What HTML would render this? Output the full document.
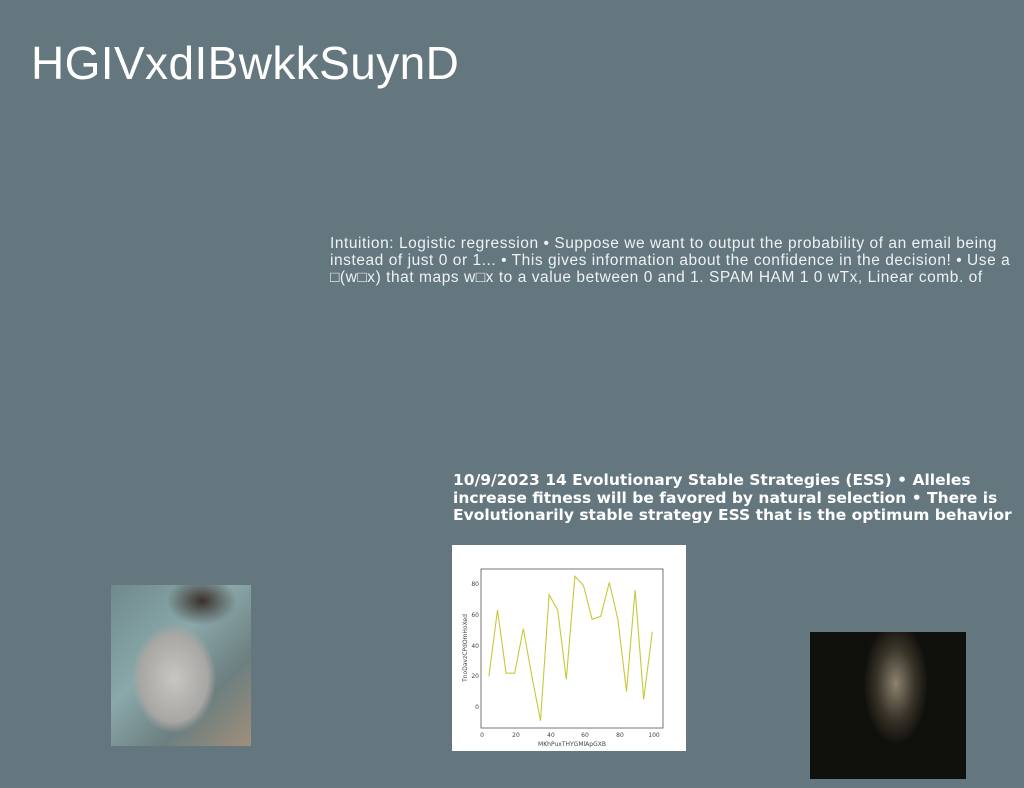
<!DOCTYPE html>
<html><head><meta charset="utf-8"><style>
body{margin:0;width:1024px;height:788px;background:#64777e;position:relative;overflow:hidden;font-family:"Liberation Sans","DejaVu Sans",sans-serif;color:#fff}
.t{position:absolute;left:31px;top:36px;font-size:46px;font-weight:300;letter-spacing:0.4px;line-height:54px}
.p{position:absolute;left:330px;top:235px;width:694px;font-size:15.5px;letter-spacing:0.55px;line-height:17px;color:#eef2f3;white-space:nowrap}
.b{position:absolute;left:453px;top:472px;width:570px;font-family:"DejaVu Sans",sans-serif;font-weight:bold;font-size:15.5px;line-height:17.5px;white-space:nowrap}
</style></head><body>
<div class="t">HGIVxdIBwkkSuynD</div>
<div class="p">Intuition: Logistic regression • Suppose we want to output the probability of an email being<br>instead of just 0 or 1... • This gives information about the confidence in the decision! • Use a<br>□(w□x) that maps w□x to a value between 0 and 1. SPAM HAM 1 0 wTx, Linear comb. of</div>
<div class="b">10/9/2023 14 Evolutionary Stable Strategies (ESS) • Alleles<br>increase fitness will be favored by natural selection • There is<br>Evolutionarily stable strategy ESS that is the optimum behavior</div>
<div style="position:absolute;left:111px;top:585px;width:140px;height:161px;background:radial-gradient(ellipse 40% 45% at 45% 58%,#c8c6c2 0,#a9a7a3 60%,transparent 75%),radial-gradient(ellipse 25% 15% at 65% 10%,#3a2f2a 0,transparent 100%),linear-gradient(135deg,#6f8a8c,#8aa8aa 40%,#6d7f80 70%,#a08f7a)"></div>
<div style="position:absolute;left:810px;top:632px;width:156px;height:147px;background:radial-gradient(ellipse 30% 60% at 55% 35%,#8c8270 0,#3a352a 40%,transparent 70%),#0f0f0b"></div>
<svg style="position:absolute;left:452px;top:545px" width="234" height="206" viewBox="452 545 234 206">
<rect x="452" y="545" width="234" height="206" fill="#fff"/>
<rect x="481" y="569" width="182" height="159" fill="none" stroke="#555" stroke-width="0.8"/>
<g font-size="6" fill="#444" font-family="DejaVu Sans,sans-serif" text-anchor="end">
<text x="479" y="586">80</text><text x="479" y="617">60</text><text x="479" y="648">40</text><text x="479" y="678">20</text><text x="479" y="709">0</text></g>
<g font-size="6" fill="#444" font-family="DejaVu Sans,sans-serif" text-anchor="middle">
<text x="482" y="737">0</text><text x="516" y="737">20</text><text x="551" y="737">40</text><text x="585" y="737">60</text><text x="620" y="737">80</text><text x="654" y="737">100</text>
<text x="572" y="746">MKhPuxTHYGMlApGXB</text>
<text transform="translate(467,648) rotate(-90)">TnoDavzCPdOmHoXed</text></g>
<polyline fill="none" stroke="#c8c83a" stroke-width="1.1" points="488.9,676.3 497.5,610.1 506.1,673.2 514.7,673.2 523.3,628.6 531.9,676.3 540.5,720.8 549.1,594.8 557.7,610.1 566.3,679.3 574.9,576.3 583.5,585.5 592.1,619.4 600.7,616.3 609.3,582.5 617.9,619.4 626.5,691.6 635.1,590.2 643.7,699.3 652.3,631.7"/>
</svg>
</body></html>
